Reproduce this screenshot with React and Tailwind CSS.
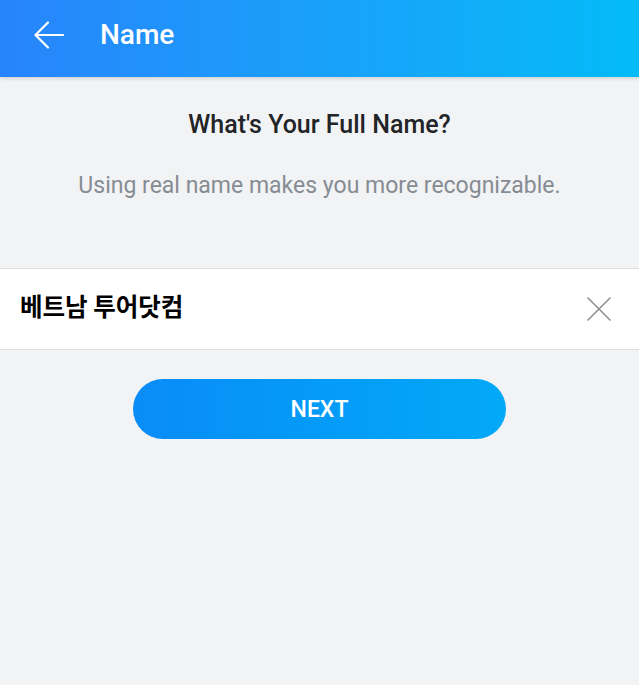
import React from "react";

export default function App() {
  return (
    <div className="w-[639px] h-[685px] bg-[#f2f3f5] overflow-hidden" style={{ fontFamily: 'Roboto, "Noto Sans CJK KR", sans-serif' }}>
      <div className="h-[77px] pb-[7px] bg-gradient-to-r from-[#2784fb] to-[#03bbf8] flex items-center shadow-[0_2px_3px_rgba(0,0,0,0.12)] relative">
        <div className="w-[100px] flex items-center pl-[34px]">
          <svg width="30" height="28" viewBox="0 0 30 28" fill="none" stroke="white" strokeWidth="2.2" strokeLinecap="round" strokeLinejoin="round">
            <path d="M29 14H2" />
            <path d="M14 1.5L1.5 14L14 26.5" />
          </svg>
        </div>
        <div className="text-white text-[28px] font-medium leading-none">Name</div>
      </div>
      <div className="pt-[34px] text-center">
        <div className="text-[25px] font-medium text-[#222427] leading-[28px]">What's Your Full Name?</div>
        <div className="mt-[33px] text-[23px] text-[#868c93] leading-[28px]">Using real name makes you more recognizable.</div>
      </div>
      <div className="mt-[68px] h-[82px] bg-white border-y border-[#dcdde0] flex items-center justify-between pl-[20px] pr-[28px]">
        <div className="text-[24.5px] font-bold text-black leading-none pb-[5px]" style={{ fontFamily: '"Noto Sans CJK KR", sans-serif' }}>베트남 투어닷컴</div>
        <svg width="24" height="24" viewBox="0 0 24 24" fill="none" stroke="#8e8e8e" strokeWidth="1.6" strokeLinecap="round">
          <path d="M1 1L23 23" />
          <path d="M23 1L1 23" />
        </svg>
      </div>
      <div className="flex justify-center mt-[29px]">
        <button className="w-[373px] h-[60px] pt-[3px] rounded-full bg-gradient-to-r from-[#0a8cf7] to-[#04a9f8] text-white text-[23px] font-medium">NEXT</button>
      </div>
    </div>
  );
}
